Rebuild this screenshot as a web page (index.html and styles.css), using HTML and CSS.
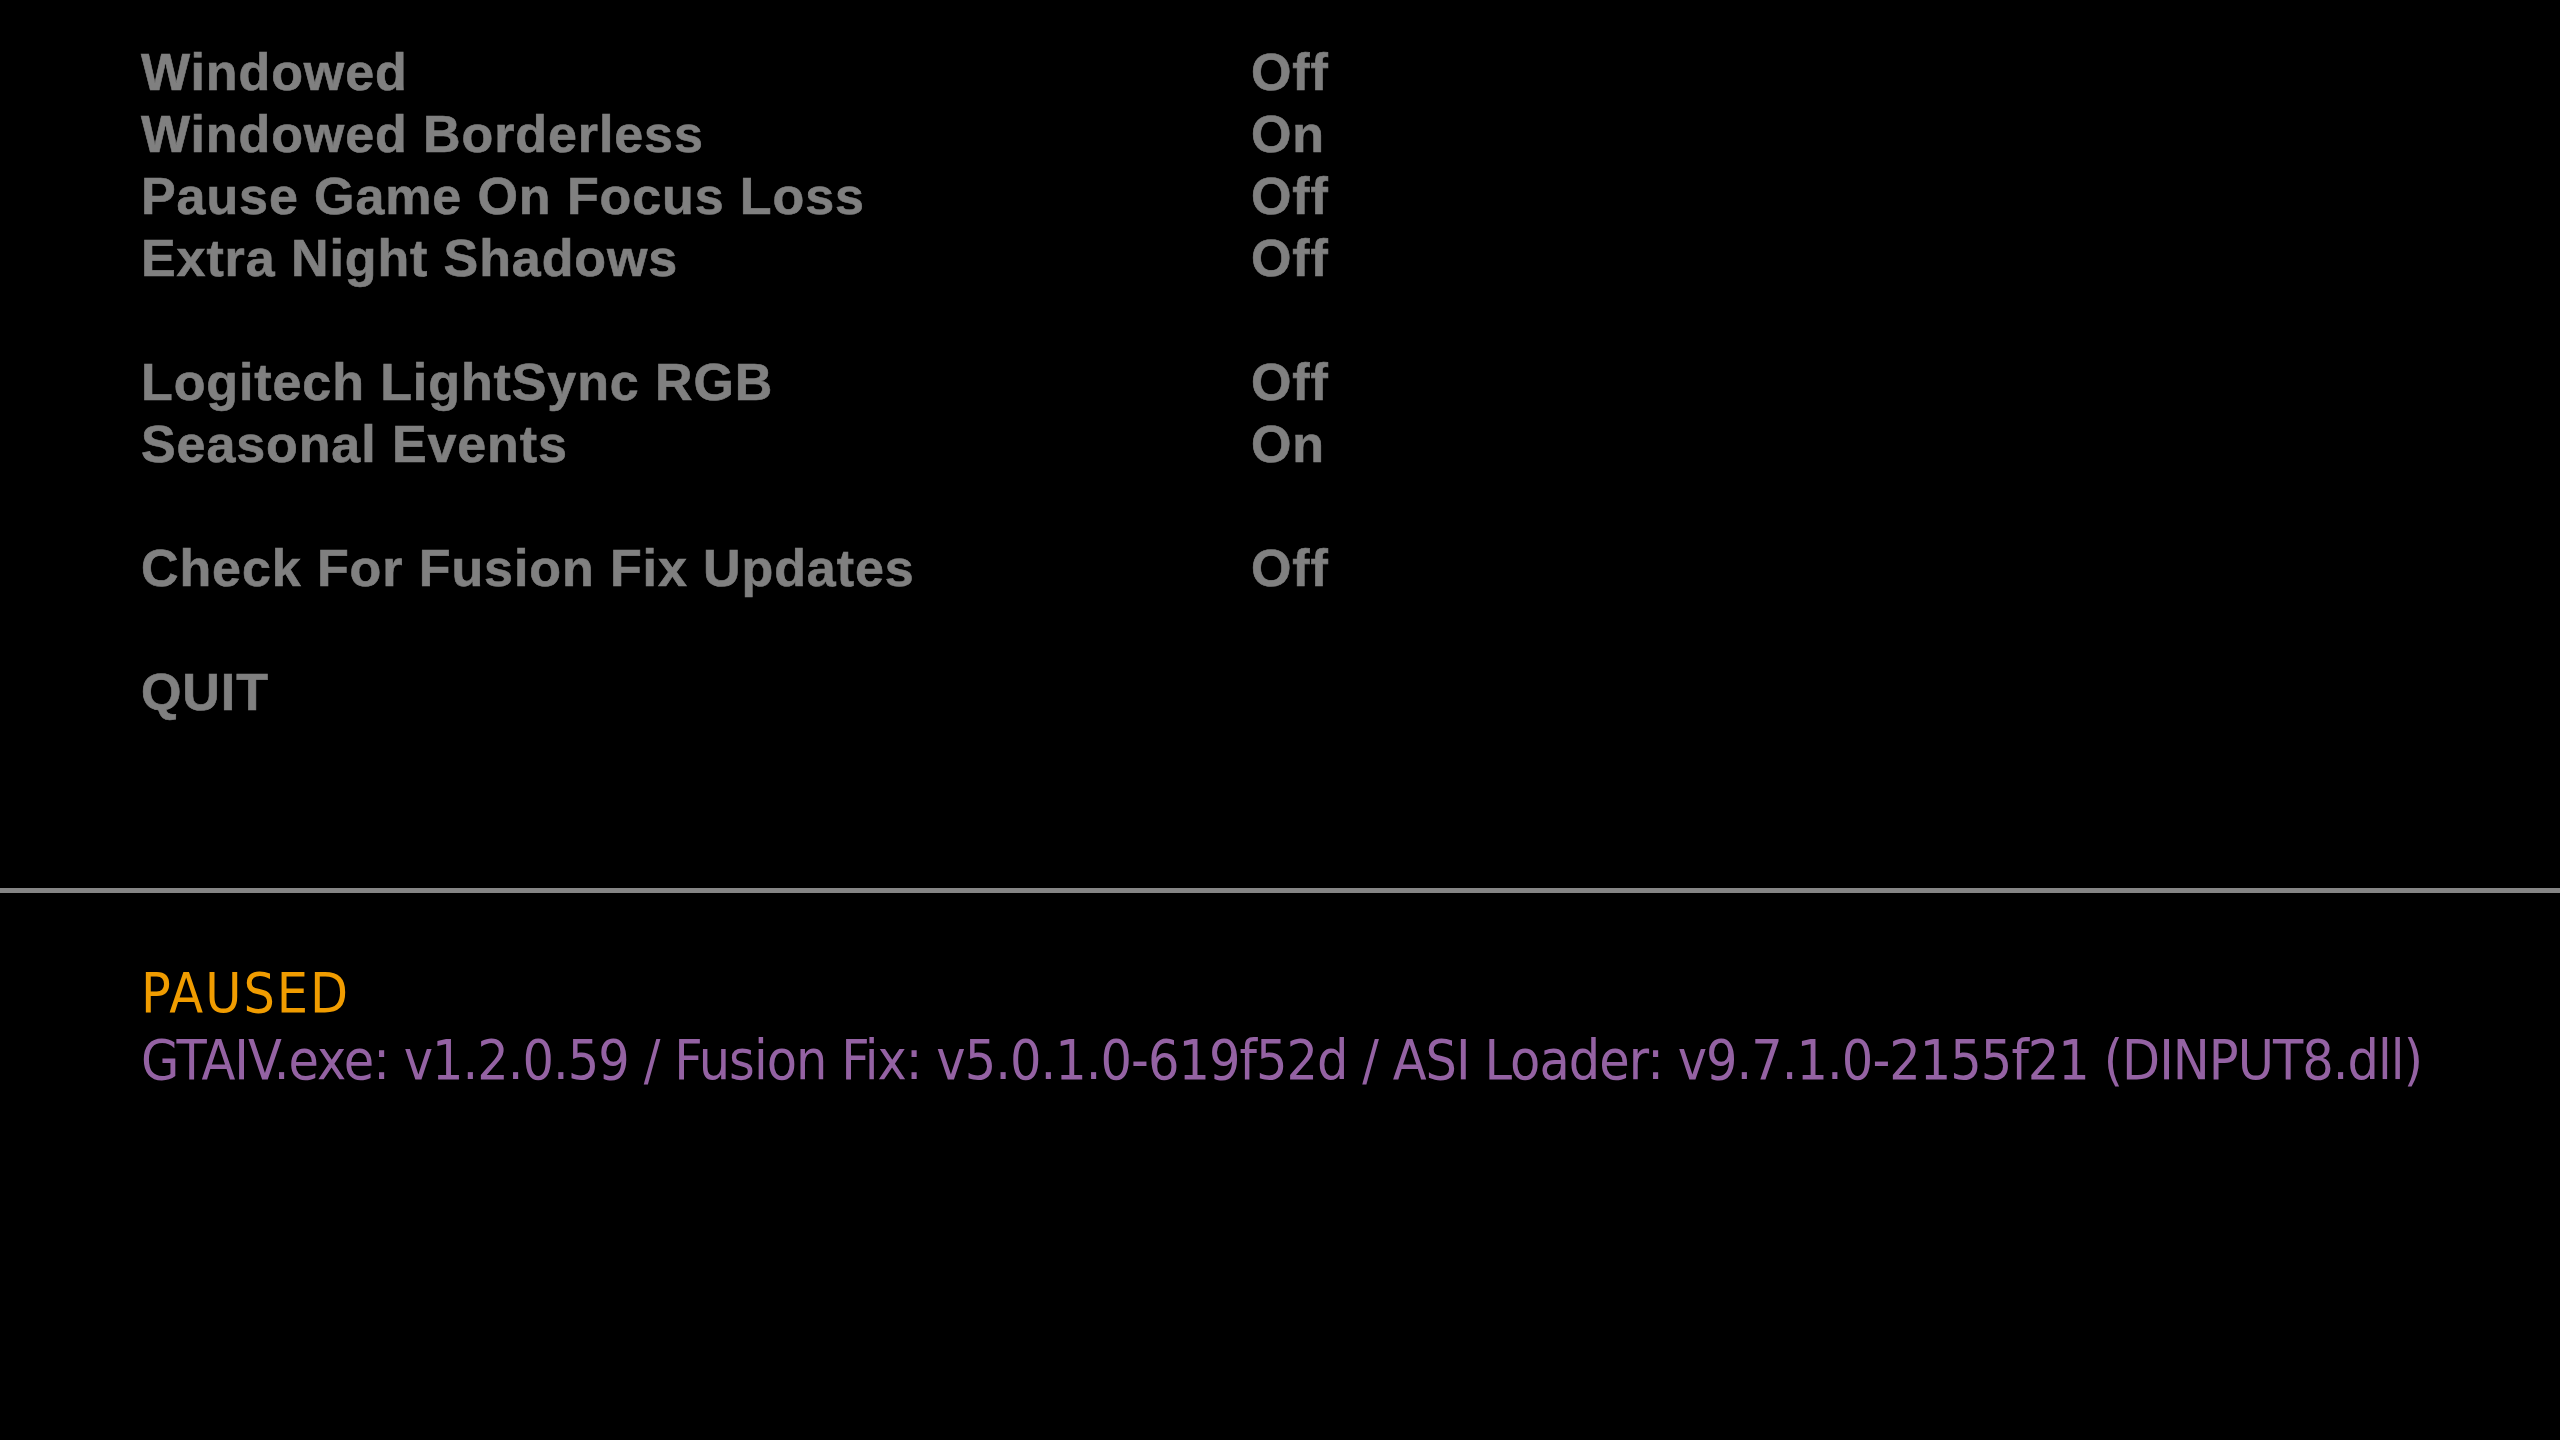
FILE: index.html
```html
<!DOCTYPE html>
<html>
<head>
<meta charset="utf-8">
<link rel="stylesheet" href="styles.css">
</head>
<body>
<div class="screen">
  <section class="menu">
    <div class="row"><span class="label">Windowed</span><span class="value">Off</span></div>
    <div class="row"><span class="label">Windowed Borderless</span><span class="value">On</span></div>
    <div class="row"><span class="label">Pause Game On Focus Loss</span><span class="value">Off</span></div>
    <div class="row"><span class="label">Extra Night Shadows</span><span class="value">Off</span></div>
    <div class="row spacer"></div>
    <div class="row"><span class="label">Logitech LightSync RGB</span><span class="value">Off</span></div>
    <div class="row"><span class="label">Seasonal Events</span><span class="value">On</span></div>
    <div class="row spacer"></div>
    <div class="row"><span class="label">Check For Fusion Fix Updates</span><span class="value">Off</span></div>
    <div class="row spacer"></div>
    <div class="row"><span class="label">QUIT</span></div>
  </section>
  <div class="divider"></div>
  <section class="status">
    <div class="paused">PAUSED</div>
    <div class="version">GTAIV.exe: v1.2.0.59 / Fusion Fix: v5.0.1.0-619f52d / ASI Loader: v9.7.1.0-2155f21 (DINPUT8.dll)</div>
  </section>
</div>
</body>
</html>
```

FILE: styles.css
```css
html, body {
  margin: 0;
  padding: 0;
  background: #000;
}

.screen {
  width: 2560px;
  height: 1440px;
  display: flex;
  flex-direction: column;
  background: #000;
}

.menu {
  box-sizing: border-box;
  height: 888px;
  padding: 41px 0 0 141px;
  display: flex;
  flex-direction: column;
  font-family: "Liberation Sans", Arial, sans-serif;
  font-weight: 700;
  font-size: 52px;
  letter-spacing: 0.9px;
  color: #808080;
  -webkit-text-stroke: 0.6px #808080;
}

.row {
  display: grid;
  grid-template-columns: 1110px auto;
  height: 62px;
  line-height: 62px;
  white-space: nowrap;
}

.divider {
  height: 5px;
  background: #858585;
}

.status {
  padding: 67px 0 0 141px;
  font-family: "DejaVu Sans Condensed", "Liberation Sans Narrow", sans-serif;
  font-size: 55px;
  letter-spacing: -0.95px;
  line-height: 67px;
  white-space: nowrap;
}

.paused {
  color: #f09c00;
  letter-spacing: 2px;
}

.version {
  color: #9462a3;
}
```
